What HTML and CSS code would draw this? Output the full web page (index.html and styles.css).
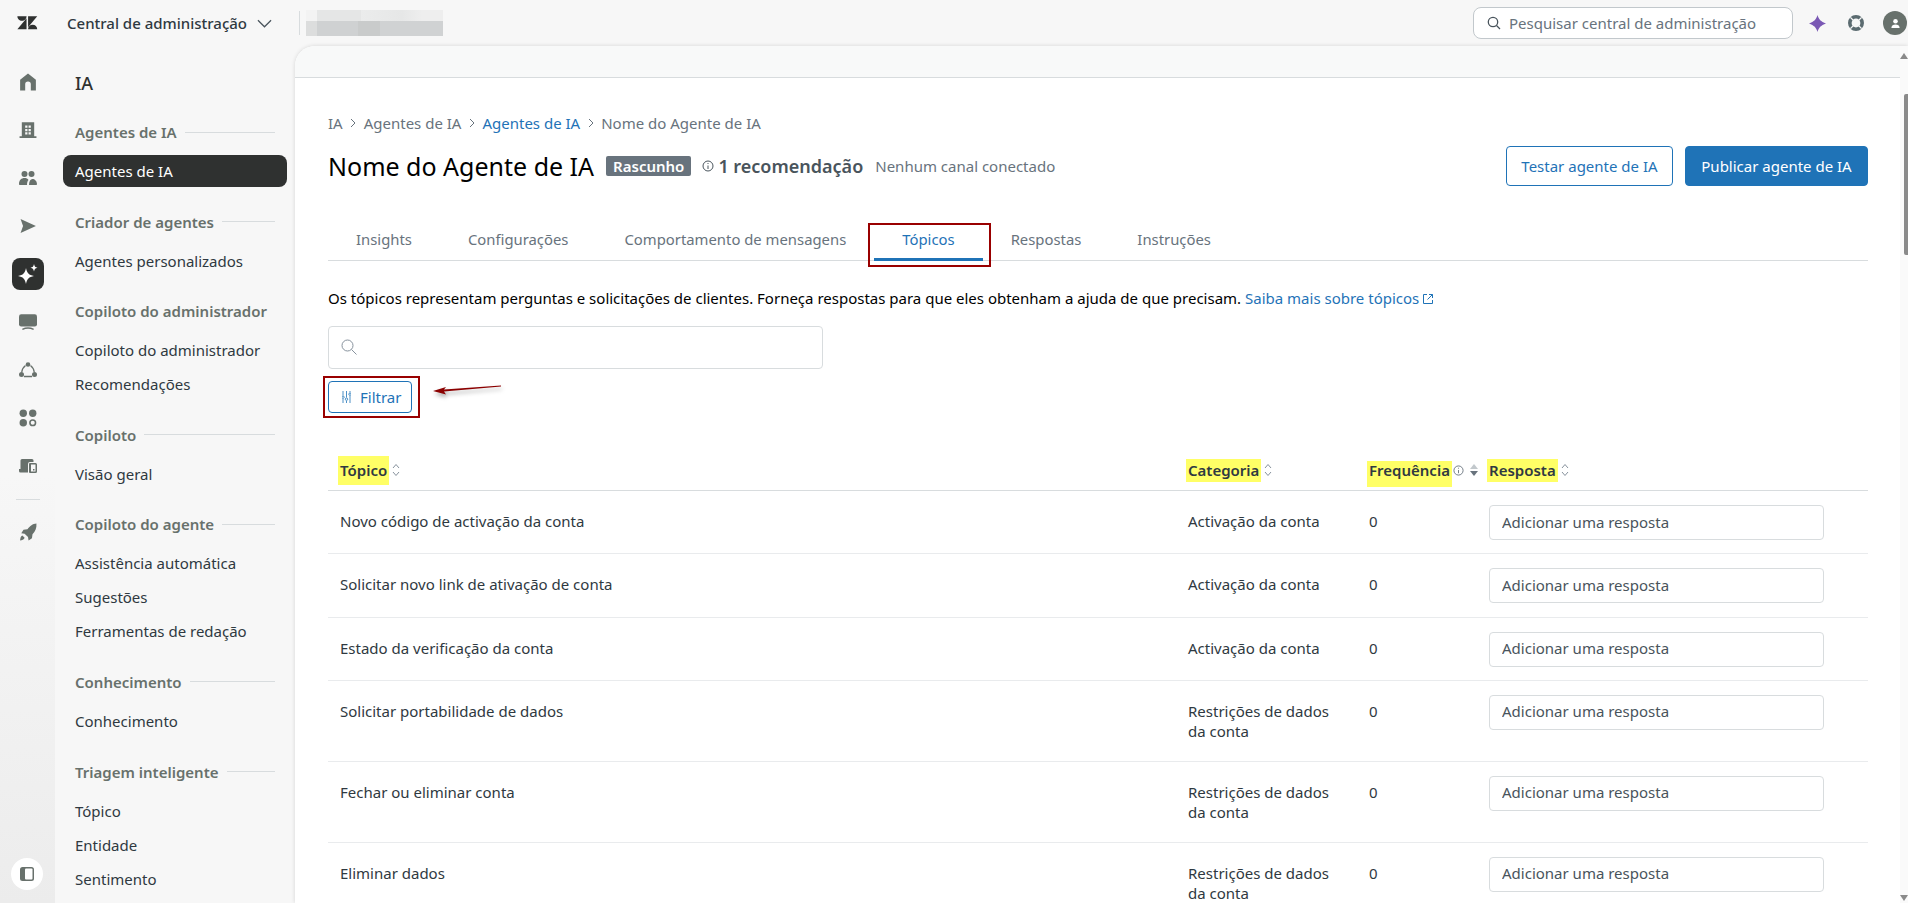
FILE: index.html
```html
<!DOCTYPE html>
<html lang="pt">
<head>
<meta charset="utf-8">
<title>Central de administração</title>
<link rel="stylesheet" href="styles.css">
</head>
<body>
<header class="topbar">
  <svg class="logo" viewBox="2 4 22 15"><path d="M12 6.5v11.6H2.4L12 6.5zM12 4.4c0 2.6-2.1 4.8-4.8 4.8S2.4 7 2.4 4.4H12zM13.6 18.1c0-2.7 2.1-4.8 4.8-4.8s4.8 2.1 4.8 4.8h-9.6zM13.6 15.9V4.4h9.6l-9.6 11.5z"/></svg>
  <span class="product">Central de administração</span>
  <svg class="chev" viewBox="0 0 16 9"><path d="M1 1l7 7 7-7"/></svg>
  <span class="vsep"></span>
  <div class="blurred"><i></i><b></b></div>
  <div class="topright">
    <div class="gsearch">
      <svg viewBox="0 0 14 14"><circle cx="6" cy="6" r="4.7"/><path d="M9.5 9.5l3.5 3.5"/></svg>
      <span>Pesquisar central de administração</span>
    </div>
    <svg class="sparkle" viewBox="0 0 18 18"><path d="M9 0c1.200 4.500 3.500 7 9 9-5.500 2-7.800 4.500-9 9-1.200-4.500-3.500-7-9-9 5.500-2 7.800-4.500 9-9z"/></svg>
    <svg class="help" viewBox="0 0 16 16"><circle cx="8" cy="8" r="5.500"/><path class="cut" d="M3 3l3 3M13 3l-3 3M3 13l3-3M13 13l-3-3"/></svg>
    <span class="avatar"><svg viewBox="0 0 12 12"><circle cx="6" cy="3.500" r="2.500"/><path d="M1.500 11c0-3 2-4 4.500-4s4.500 1 4.500 4z"/></svg></span>
  </div>
</header>
<div class="body">
  <aside class="rail">
    <svg class="ri" viewBox="0 0 16 16"><path d="M8 0.500L15 6v9.500h-4.500V10a2.500 2.500 0 0 0-5 0v5.500H1V6z" stroke-linejoin="round"/></svg>
    <svg class="ri" viewBox="0 0 16 16"><path fill-rule="evenodd" d="M2.500 1h11v12.500h2V15H.5v-1.500h2zM5.500 4v2h2V4zm3 0v2h2V4zm-3 3v2h2V7zm3 0v2h2V7zm-3 3v2h2v-2zm3 0v2h2v-2z"/></svg>
    <svg class="ri" viewBox="0 0 18 16"><circle cx="5.500" cy="4" r="3"/><circle cx="12.500" cy="4" r="3"/><path d="M0 14c0-4 2.500-6 5.500-6 2 0 3 .6 4 2-1 1-1.500 2.500-1.500 5H1c-.6 0-1-.4-1-1zM10 15c0-4 1.500-6 3.500-6s4.500 2 4.500 5c0 .6-.4 1-1 1z"/></svg>
    <svg class="ri ri-send" viewBox="0 0 16 16"><path d="M.5 1L16 8 .5 15l2.500-7z"/></svg>
    <span class="ri-active"><svg viewBox="0 0 20 20"><path d="M8 4c1 5.200 2.800 7 8 8-5.200 1-7 2.800-8 8-1-5.200-2.800-7-8-8 5.200-1 7-2.800 8-8zM16 0c.5 2.500 1.300 3.300 3.500 3.800C17.300 4.300 16.500 5 16 7.500c-.5-2.500-1.300-3.200-3.500-3.700C14.700 3.300 15.500 2.500 16 0z"/></svg></span>
    <svg class="ri" viewBox="0 0 16 16"><rect x="0" y="1" width="16" height="11" rx="2"/><path d="M3 14.500c3-1.500 7-1.500 10 0" fill="none" stroke="#68716c" stroke-width="1.300"/></svg>
    <svg class="ri" viewBox="0 0 18 16"><circle cx="9" cy="2.500" r="2.300"/><circle cx="2.500" cy="12.500" r="2.500"/><circle cx="15.500" cy="12.500" r="2.500"/><path d="M6.500 3.500C4 5.500 3 7.500 2.800 10M11.500 3.500c2.500 2 3.500 4 3.700 6.500M5 14.500h8" fill="none" stroke="#68716c" stroke-width="1.300"/></svg>
    <svg class="ri" viewBox="0 0 16 16"><circle cx="3.800" cy="3.800" r="3.300"/><circle cx="12.200" cy="3.800" r="3.300"/><circle cx="3.800" cy="12.200" r="3.300"/><circle cx="12.200" cy="12.200" r="2.500" fill="none" stroke="#68716c" stroke-width="1.400"/></svg>
    <svg class="ri" viewBox="0 0 18 16"><path d="M3 1h10a1.500 1.500 0 0 1 1.500 1.500V4H11a2 2 0 0 0-2 2v6H0v-1h1.500V2.500A1.500 1.500 0 0 1 3 1zM0 12h9v2.500H1.500A1.500 1.500 0 0 1 0 13z"/><path fill-rule="evenodd" d="M11 5h5.500A1.500 1.500 0 0 1 18 6.500v7a1.500 1.500 0 0 1-1.500 1.500H11a1 1 0 0 1-1-1V6a1 1 0 0 1 1-1zm1 1.500V13.500h4.500V6.500zM14 11h1.500v1.500H14z"/></svg>
    <span class="rail-sep"></span>
    <svg class="ri" viewBox="0 0 16 16"><path d="M15.500 .5c.3 4-1 7-3.500 9.500l-.5 3.500-3 2-.5-3L5 9.500 2 9l2-3 3.500-.5C10 3 12 .5 15.500 .5zM3 11l2 2c-.5 1.500-2.500 2.500-4 2.500C1 14 1.500 11.500 3 11z"/></svg>
    <span class="rail-toggle"><svg viewBox="0 0 16 16"><rect x="1" y="1" width="14" height="14" rx="2.500" fill="#68716c"/><rect x="6" y="2.500" width="7.500" height="11" rx="1" fill="#fff"/></svg></span>
  </aside>
  <nav class="nav">
    <div class="nav-title">IA</div>
    <div class="nav-h">Agentes de IA</div>
    <a class="nav-i active">Agentes de IA</a>
    <div class="nav-h">Criador de agentes</div>
    <a class="nav-i">Agentes personalizados</a>
    <div class="nav-h">Copiloto do administrador</div>
    <a class="nav-i">Copiloto do administrador</a>
    <a class="nav-i">Recomendações</a>
    <div class="nav-h">Copiloto</div>
    <a class="nav-i">Visão geral</a>
    <div class="nav-h">Copiloto do agente</div>
    <a class="nav-i">Assistência automática</a>
    <a class="nav-i">Sugestões</a>
    <a class="nav-i">Ferramentas de redação</a>
    <div class="nav-h">Conhecimento</div>
    <a class="nav-i">Conhecimento</a>
    <div class="nav-h">Triagem inteligente</div>
    <a class="nav-i">Tópico</a>
    <a class="nav-i">Entidade</a>
    <a class="nav-i">Sentimento</a>
  </nav>
  <main class="main">
    <div class="pane">
      <div class="band"></div>
      <div class="content">
        <div class="crumbs">
          <span>IA</span><svg viewBox="0 0 6 10"><path d="M1 1l4 4-4 4"/></svg>
          <span>Agentes de IA</span><svg viewBox="0 0 6 10"><path d="M1 1l4 4-4 4"/></svg>
          <a>Agentes de IA</a><svg viewBox="0 0 6 10"><path d="M1 1l4 4-4 4"/></svg>
          <span>Nome do Agente de IA</span>
        </div>
        <div class="titlerow">
          <h1>Nome do Agente de IA</h1>
          <span class="badge">Rascunho</span>
          <svg class="info info-rec" viewBox="0 0 12 12"><circle cx="6" cy="6" r="5"/><path d="M6 5.500V9M6 3v1"/></svg>
          <span class="rec">1 recomendação</span>
          <span class="nochan">Nenhum canal conectado</span>
          <div class="actions">
            <button class="btn btn-o">Testar agente de IA</button>
            <button class="btn btn-p">Publicar agente de IA</button>
          </div>
        </div>
        <div class="tabs">
          <a class="tab">Insights</a>
          <a class="tab">Configurações</a>
          <a class="tab">Comportamento de mensagens</a>
          <a class="tab on">Tópicos</a>
          <a class="tab">Respostas</a>
          <a class="tab">Instruções</a>
        </div>
        <p class="intro">Os tópicos representam perguntas e solicitações de clientes. Forneça respostas para que eles obtenham a ajuda de que precisam. <a>Saiba mais sobre tópicos<svg viewBox="0 0 12 12"><path d="M5 1.500H1.500v9h9V7M7 1.500h3.500V5M10.500 1.500L5.500 6.500"/></svg></a></p>
        <div class="search"><svg viewBox="0 0 16 16"><circle cx="6.500" cy="6.500" r="5.500"/><path d="M10.500 10.500L15.500 15.500"/></svg></div>
        <button class="filter"><svg viewBox="0 0 9 12"><path d="M1 0v4.500M1 8v4M4.500 0v6.500M4.500 10v2M8 0v1.500M8 5v7"/><circle cx="1" cy="6.200" r="1.200"/><circle cx="4.500" cy="8.200" r="1.200"/><circle cx="8" cy="3.200" r="1.200"/></svg>Filtrar</button>
        <div class="table">
          <div class="tr th">
            <div><span class="hl hl-top">Tópico</span><svg class="sort" viewBox="0 0 8 14"><path d="M1 5l3-3.500L7 5M1 9l3 3.500L7 9"/></svg></div>
            <div><span class="hl hl-cat">Categoria</span><svg class="sort" viewBox="0 0 8 14"><path d="M1 5l3-3.500L7 5M1 9l3 3.500L7 9"/></svg></div>
            <div><span class="hl hl-freq">Frequência</span><svg class="info info-th" viewBox="0 0 12 12"><circle cx="6" cy="6" r="5"/><path d="M6 5.500V9M6 3v1"/></svg><svg class="sort-solid" viewBox="0 0 8 14"><path class="up" d="M0 6l4-5 4 5z"/><path class="dn" d="M0 8h8l-4 5z"/></svg></div>
            <div><span class="hl hl-res">Resposta</span><svg class="sort" viewBox="0 0 8 14"><path d="M1 5l3-3.500L7 5M1 9l3 3.500L7 9"/></svg></div>
          </div>
          <div class="tr"><div>Novo código de activação da conta</div><div>Activação da conta</div><div>0</div><div class="resp"><input placeholder="Adicionar uma resposta"></div></div>
          <div class="tr"><div>Solicitar novo link de ativação de conta</div><div>Activação da conta</div><div>0</div><div class="resp"><input placeholder="Adicionar uma resposta"></div></div>
          <div class="tr"><div>Estado da verificação da conta</div><div>Activação da conta</div><div>0</div><div class="resp"><input placeholder="Adicionar uma resposta"></div></div>
          <div class="tr"><div>Solicitar portabilidade de dados</div><div>Restrições de dados da conta</div><div>0</div><div class="resp"><input placeholder="Adicionar uma resposta"></div></div>
          <div class="tr"><div>Fechar ou eliminar conta</div><div>Restrições de dados da conta</div><div>0</div><div class="resp"><input placeholder="Adicionar uma resposta"></div></div>
          <div class="tr"><div>Eliminar dados</div><div>Restrições de dados da conta</div><div>0</div><div class="resp"><input placeholder="Adicionar uma resposta"></div></div>
        </div>
      </div>
    </div>
    <div class="scrollbar"><i class="sb-up"></i><i class="sb-thumb"></i><i class="sb-dn"></i></div>
  </main>
</div>
<span class="mark mark-tab"></span>
<span class="mark mark-filter"></span>
<svg class="mark-arrow" viewBox="0 0 80 20"><path d="M2 9l13-4-2 2.500L70 3.500v1L13 9.500l2 3z"/></svg>
</body>
</html>
```
FILE: styles.css
```css
* { box-sizing: border-box; }
html, body { margin: 0; height: 903px; overflow: hidden; }
body { font: 15px/20px "Noto Sans", "Open Sans", sans-serif; color: #2f3941; background: #f7f7f7; position: relative; }
svg { display: block; flex: none; }
a { color: #1f73b7; }

.topbar { height: 46px; display: flex; align-items: center; padding-left: 17px; }
.logo { width: 21px; height: 16px; fill: #2f3130; }
.product { margin-left: 29px; font-size: 15px; font-weight: 500; color: #2f3941; }
.chev { width: 15px; height: 9px; margin-left: 10px; fill: none; stroke: #49545c; stroke-width: 1.300; }
.vsep { width: 1px; height: 24px; background: #d8dcde; margin-left: 27px; }
.blurred { width: 137px; height: 26px; margin-left: 6px; display: flex; flex-direction: column; }
.blurred i { height: 11px; width: 137px; background: linear-gradient(90deg, #f3f3f3 8%, #e5e6e6 8%, #e5e6e6 40%, #ebecec 40%, #e6e7e7 70%, #eeeeee 85%); }
.blurred b { height: 15px; background: linear-gradient(90deg, #dcdddd 8%, #cfd1d2 8%, #cfd1d2 38%, #c9cbcb 38%, #c9cbcb 54%, #d0d2d3 54%); }
.topright { margin-left: auto; display: flex; align-items: center; }
.gsearch { width: 320px; height: 32px; border: 1px solid #c2c8cc; border-radius: 8px; background: #fff; display: flex; align-items: center; padding-left: 13px; gap: 8px; color: #68737d; }
.gsearch svg { width: 14px; height: 14px; fill: none; stroke: #49545c; stroke-width: 1.300; }
.sparkle { width: 17px; height: 17px; fill: #7a58b4; margin-left: 16px; }
.help { width: 18px; height: 18px; margin-left: 21px; fill: none; stroke: #5b6b70; stroke-width: 3.200; }
.help .cut { stroke: #f7f7f7; stroke-width: 1.200; }
.avatar { width: 24px; height: 24px; border-radius: 50%; background: #68716c; margin-left: 18px; margin-right: 1px; display: flex; align-items: center; justify-content: center; }
.avatar svg { width: 11px; height: 11px; fill: #fff; }

.body { height: 857px; display: flex; }
.rail { width: 55px; height: 857px; display: flex; flex-direction: column; align-items: center; padding-top: 27px; background: linear-gradient(#f7f7f7 50%, #ececec 100%); position: relative; }
.ri { width: 18px; height: 18px; fill: #68716c; margin-bottom: 30px; }
.ri-send { transform: scale(.88); }
.ri-active { width: 32px; height: 32px; margin: -7px 0 23px; border-radius: 8px; background: #2f3130; display: flex; align-items: center; justify-content: center; }
.ri-active svg { width: 20px; height: 20px; fill: #fff; }
.rail-sep { width: 24px; height: 1px; background: #d8dcde; margin: -6px 0 23px; }
.rail-toggle { position: absolute; left: 11px; bottom: 13px; width: 32px; height: 32px; border-radius: 50%; background: #fff; display: flex; align-items: center; justify-content: center; }
.rail-toggle svg { width: 16px; height: 16px; }

.nav { width: 240px; padding: 25px 8px 0; background: #f7f7f7; }
.nav-title { font-size: 18px; line-height: 24px; padding-left: 12px; color: #2f3130; font-weight: 500; margin-bottom: 27px; }
.nav-h { display: flex; align-items: center; gap: 8px; height: 20px; margin: 24.600px 12px 13px; font-weight: 600; color: #68716c; white-space: nowrap; }
.nav-title + .nav-h { margin-top: 0; }
.nav-h::after { content: ""; flex: 1; height: 1px; background: #d8dcde; }
.nav-i { display: block; height: 32px; margin: 2px 0; padding: 0 12px; line-height: 32px; border-radius: 8px; color: #2f3941; white-space: nowrap; }
.nav-i.active { background: #2f3130; color: #fff; }

.main { width: 1613px; height: 857px; background: #fff; border-top-left-radius: 20px; box-shadow: 0 0 4px rgba(0,0,0,.14); display: flex; overflow: hidden; }
.pane { width: 1605px; }
.band { height: 32px; background: #f8f9f9; border-bottom: 1px solid #d8dcde; }
.content { padding: 36px 32px 0 33px; }
.crumbs { display: flex; align-items: center; gap: 7.500px; height: 20px; padding-bottom: 2px; color: #68737d; }
.crumbs svg { width: 6px; height: 10px; fill: none; stroke: #68737d; stroke-width: 1; }
.titlerow { display: flex; align-items: center; height: 40px; margin-top: 12px; }
h1 { margin: 0; font-size: 25px; line-height: 32px; font-weight: 400; color: #000; }
.badge { margin-left: 12px; padding: 0 7px; height: 20px; line-height: 20px; background: #68737d; color: #fff; font-size: 15px; font-weight: 600; border-radius: 2px; }
.info { fill: none; stroke: #49545c; stroke-width: 1; }
.info-rec { width: 12px; height: 12px; margin-left: 11px; }
.rec { margin-left: 4px; font-size: 18px; font-weight: 600; color: #49545c; }
.nochan { margin-left: 12px; color: #68737d; }
.actions { margin-left: auto; display: flex; gap: 12px; }
.btn { height: 40px; border-radius: 4px; font: inherit; border: 1px solid #1f73b7; }
.btn-o { width: 167px; background: #fff; color: #1f73b7; }
.btn-p { width: 183px; background: #1f73b7; color: #fff; }

.tabs { display: flex; height: 41px; margin-top: 34px; border-bottom: 1px solid #d8dcde; font-size: 14.850px; }
.tab { height: 40px; padding: 0 28px; line-height: 38px; color: #68737d; }
.tab.on { color: #1f73b7; border-bottom: 3px solid #1f73b7; height: 41px; }
.intro { margin: 27px 0 0; color: #000; }
.intro a { white-space: nowrap; }
.intro svg { display: inline-block; width: 12px; height: 12px; margin-left: 3px; vertical-align: -1px; fill: none; stroke: #1f73b7; stroke-width: 1; }
.search { width: 495px; height: 43px; margin-top: 18px; border: 1px solid #d8dcde; border-radius: 4px; display: flex; align-items: center; padding: 0 0 2px 12px; }
.search svg { width: 16px; height: 16px; fill: none; stroke: #87929d; stroke-width: 1; }
.filter { display: flex; align-items: center; gap: 9px; width: 84px; height: 32px; margin-top: 12px; padding: 0 0 0 13px; border: 1px solid #1f73b7; border-radius: 4px; background: #fff; color: #1f73b7; font: inherit; }
.filter svg { width: 9px; height: 12px; fill: none; stroke: #1f73b7; stroke-width: .8; }

.table { margin-top: 47px; }
.tr { display: grid; grid-template-columns: 848px 181px 132px 1fr; border-bottom: 1px solid #e9ebed; min-height: 63.330px; }
.tr > div { padding: 20px 12px; }
.tr > .resp { padding: 14px 0 13px; }
.resp input { display: block; width: 335px; height: 35px; padding: 0 12px 2px; border: 1px solid #d8dcde; border-radius: 4px; font: inherit; color: #49545c; background: #fff; }
.resp input::placeholder { color: #49545c; opacity: 1; }
.th { min-height: 0; height: 31px; border-bottom: 1px solid #d8dcde; font-weight: 600; }
.tr.th > div { padding: 0 12px; display: flex; align-items: center; height: 20px; }
.tr.th > div:last-child { padding: 0; }
.hl { background: #ffff66; display: block; margin-left: -2px; padding: 0 2px; }
.hl-top { height: 29px; line-height: 29px; }
.hl-cat { height: 23px; line-height: 23px; }
.hl-freq { height: 26px; line-height: 18px; margin-top: 8px; }
.hl-res { height: 23px; line-height: 23px; }
.sort { width: 8px; height: 14px; margin-left: 3px; fill: none; stroke: #87929d; stroke-width: 1; }
.info-th { width: 11px; height: 11px; margin-left: 1px; stroke: #68737d; }
.sort-solid { width: 8px; height: 14px; margin-left: 6px; }
.sort-solid .up { fill: #c2c8cc; }
.sort-solid .dn { fill: #68737d; }

.scrollbar { width: 8px; background: #fafafa; position: relative; display: flex; flex-direction: column; align-items: flex-end; }
.sb-up { width: 0; height: 0; margin: 7px 0 0; border: 4px solid transparent; border-top: 0; border-bottom: 6px solid #8a8a8a; }
.sb-thumb { width: 4px; height: 161px; margin-top: 35px; background: #8a8a8a; border-radius: 2px 0 0 2px; }
.sb-dn { width: 0; height: 0; margin-top: auto; margin-bottom: 2px; border: 4px solid transparent; border-bottom: 0; border-top: 6px solid #8a8a8a; }

.mark { position: absolute; border: 2px solid #990000; }
.mark-tab { left: 868px; top: 223px; width: 123px; height: 44px; }
.mark-filter { left: 323px; top: 376px; width: 97px; height: 42px; }
.mark-arrow { position: absolute; left: 431px; top: 382px; width: 80px; height: 20px; fill: #8b0000; filter: drop-shadow(1px 3px 2px rgba(0,0,0,.35)); }
```
